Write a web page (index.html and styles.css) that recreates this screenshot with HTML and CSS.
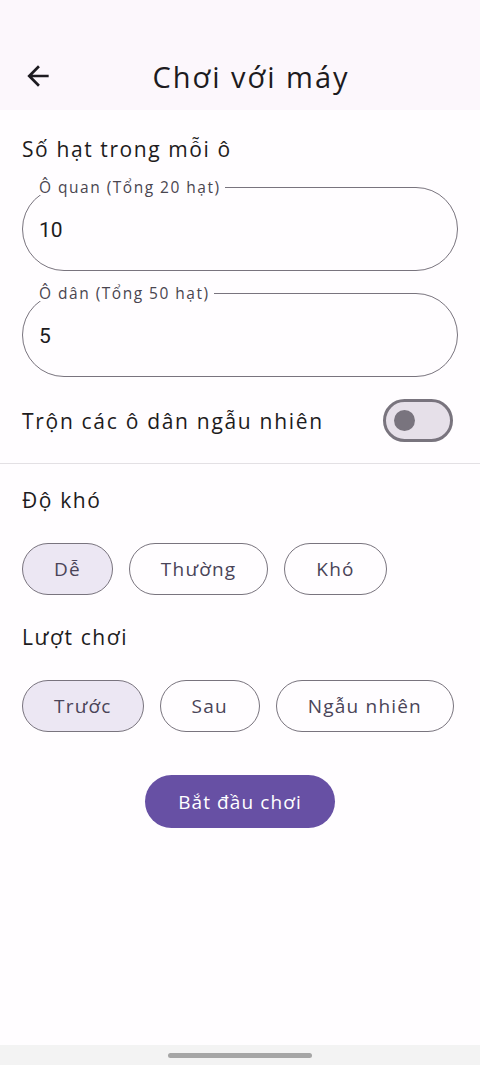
FILE: index.html
```html
<!DOCTYPE html>
<html lang="vi">
<head>
  <meta charset="utf-8"/>
  <title>Chơi với máy</title>
  <link rel="stylesheet" href="styles.css">
</head>
<body>
	<header class="appbar">
		<button class="icon-btn" aria-label="Quay lại">
			<svg width="32" height="32" viewBox="0 0 24 24"><path d="M20 11H7.830l5.59-5.59L12 4l-8 8 8 8 1.41-1.41L7.83 13H20v-2z" fill="#1d1b20"/></svg>
		</button>
		<h1 class="title">Chơi với máy</h1>
		<span></span>
	</header>

	<main class="content">
		<section class="block">
			<h2 class="label">Số hạt trong mỗi ô</h2>

			<fieldset class="field field-first">
				<legend>Ô quan (Tổng 20 hạt)</legend>
				<div class="value">10</div>
			</fieldset>

			<fieldset class="field field-second">
				<legend>Ô dân (Tổng 50 hạt)</legend>
				<div class="value">5</div>
			</fieldset>

			<div class="switch-row">
				<span class="switch-label">Trộn các ô dân ngẫu nhiên</span>
				<button class="switch" aria-label="Trộn"><span class="thumb"></span></button>
			</div>
		</section>

		<hr class="divider"/>

		<section class="block">
			<h2 class="label label-top">Độ khó</h2>
			<div class="chips">
				<button class="chip selected">Dễ</button>
				<button class="chip">Thường</button>
				<button class="chip">Khó</button>
			</div>

			<h2 class="label label-next">Lượt chơi</h2>
			<div class="chips">
				<button class="chip selected">Trước</button>
				<button class="chip">Sau</button>
				<button class="chip">Ngẫu nhiên</button>
			</div>

			<div class="actions">
				<button class="start">Bắt đầu chơi</button>
			</div>
		</section>
	</main>

	<footer class="navbar"><span class="handle"></span></footer>
</body>
</html>
```

FILE: styles.css
```css
	* {
		box-sizing: border-box;
	}

	body {
		margin: 0;
		height: 1065px;
		display: flex;
		flex-direction: column;
		background-color: #fffdff;
		color: #1d1b20;
		font-family: "Open Sans", Lato, sans-serif;
		font-weight: 400;
	}

	button {
		font-family: inherit;
		font-weight: inherit;
		cursor: pointer;
	}

	.appbar {
		height: 110px;
		padding: 48px 0 0 22px;
		display: grid;
		grid-template-columns: 1fr auto 1fr;
		align-items: center;
		grid-auto-rows: 56px;
		background-color: #fcf7fc;
	}

	.icon-btn {
		width: 32px;
		height: 32px;
		padding: 0;
		border: 0;
		background: none;
		display: flex;
	}

	.title {
		margin: 0;
		font-size: 29px;
		font-weight: 400;
		letter-spacing: 2px;
	}

	.content {
		flex: 1;
	}

	.block {
		padding: 0 22px;
	}

	.label {
		margin: 25px 0 0;
		font-size: 21px;
		line-height: 28px;
		font-weight: 400;
		letter-spacing: 1.6px;
	}

	.label-top {
		margin-top: 22px;
	}

	.label-next {
		margin-top: 28px;
	}

	.field {
		margin: 16px 0 0;
		padding: 0 12px;
		border: 1px solid #79747e;
		border-radius: 42px;
	}

	.field-second {
		margin-top: 14px;
	}

	.field legend {
		padding: 0 4px;
		font-size: 15.5px;
		line-height: 16px;
		color: #49454f;
		letter-spacing: 1.5px;
	}

	.value {
		height: 75px;
		padding: 0 0 5px 4px;
		display: flex;
		align-items: center;
		font-family: Roboto, sans-serif;
		font-size: 21px;
	}

	.switch-row {
		margin-top: 22px;
		height: 43px;
		display: flex;
		align-items: center;
		justify-content: space-between;
	}

	.switch-label {
		font-size: 21px;
		letter-spacing: 1.7px;
	}

	.switch {
		width: 70px;
		height: 43px;
		margin-right: 5px;
		padding: 0 0 0 8px;
		border: 3px solid #79747e;
		border-radius: 22px;
		background-color: #e6e0e9;
		display: flex;
		align-items: center;
	}

	.thumb {
		width: 21px;
		height: 21px;
		border-radius: 50%;
		background-color: #79747e;
	}

	.divider {
		margin: 21px 0 0;
		height: 1px;
		border: 0;
		background-color: #e3e0e4;
	}

	.chips {
		margin-top: 29px;
		display: flex;
		gap: 16px;
	}

	.chip {
		height: 52px;
		padding: 0 31px;
		border: 1px solid #79747e;
		border-radius: 26px;
		background-color: #fffdff;
		color: #4a4458;
		font-size: 19px;
		letter-spacing: 1.2px;
	}

	.chip.selected {
		background-color: #ece7f3;
	}

	.actions {
		margin-top: 43px;
		display: flex;
		justify-content: center;
	}

	.start {
		height: 53px;
		padding: 0 33px;
		border: 0;
		border-radius: 27px;
		background-color: #6750a4;
		color: #ffffff;
		font-size: 19px;
		letter-spacing: 1.1px;
	}

	.navbar {
		height: 20px;
		display: flex;
		align-items: center;
		justify-content: center;
		background-color: #f3f3f3;
	}

	.handle {
		width: 144px;
		height: 5px;
		border-radius: 3px;
		background-color: #a6a6a6;
	}
```
